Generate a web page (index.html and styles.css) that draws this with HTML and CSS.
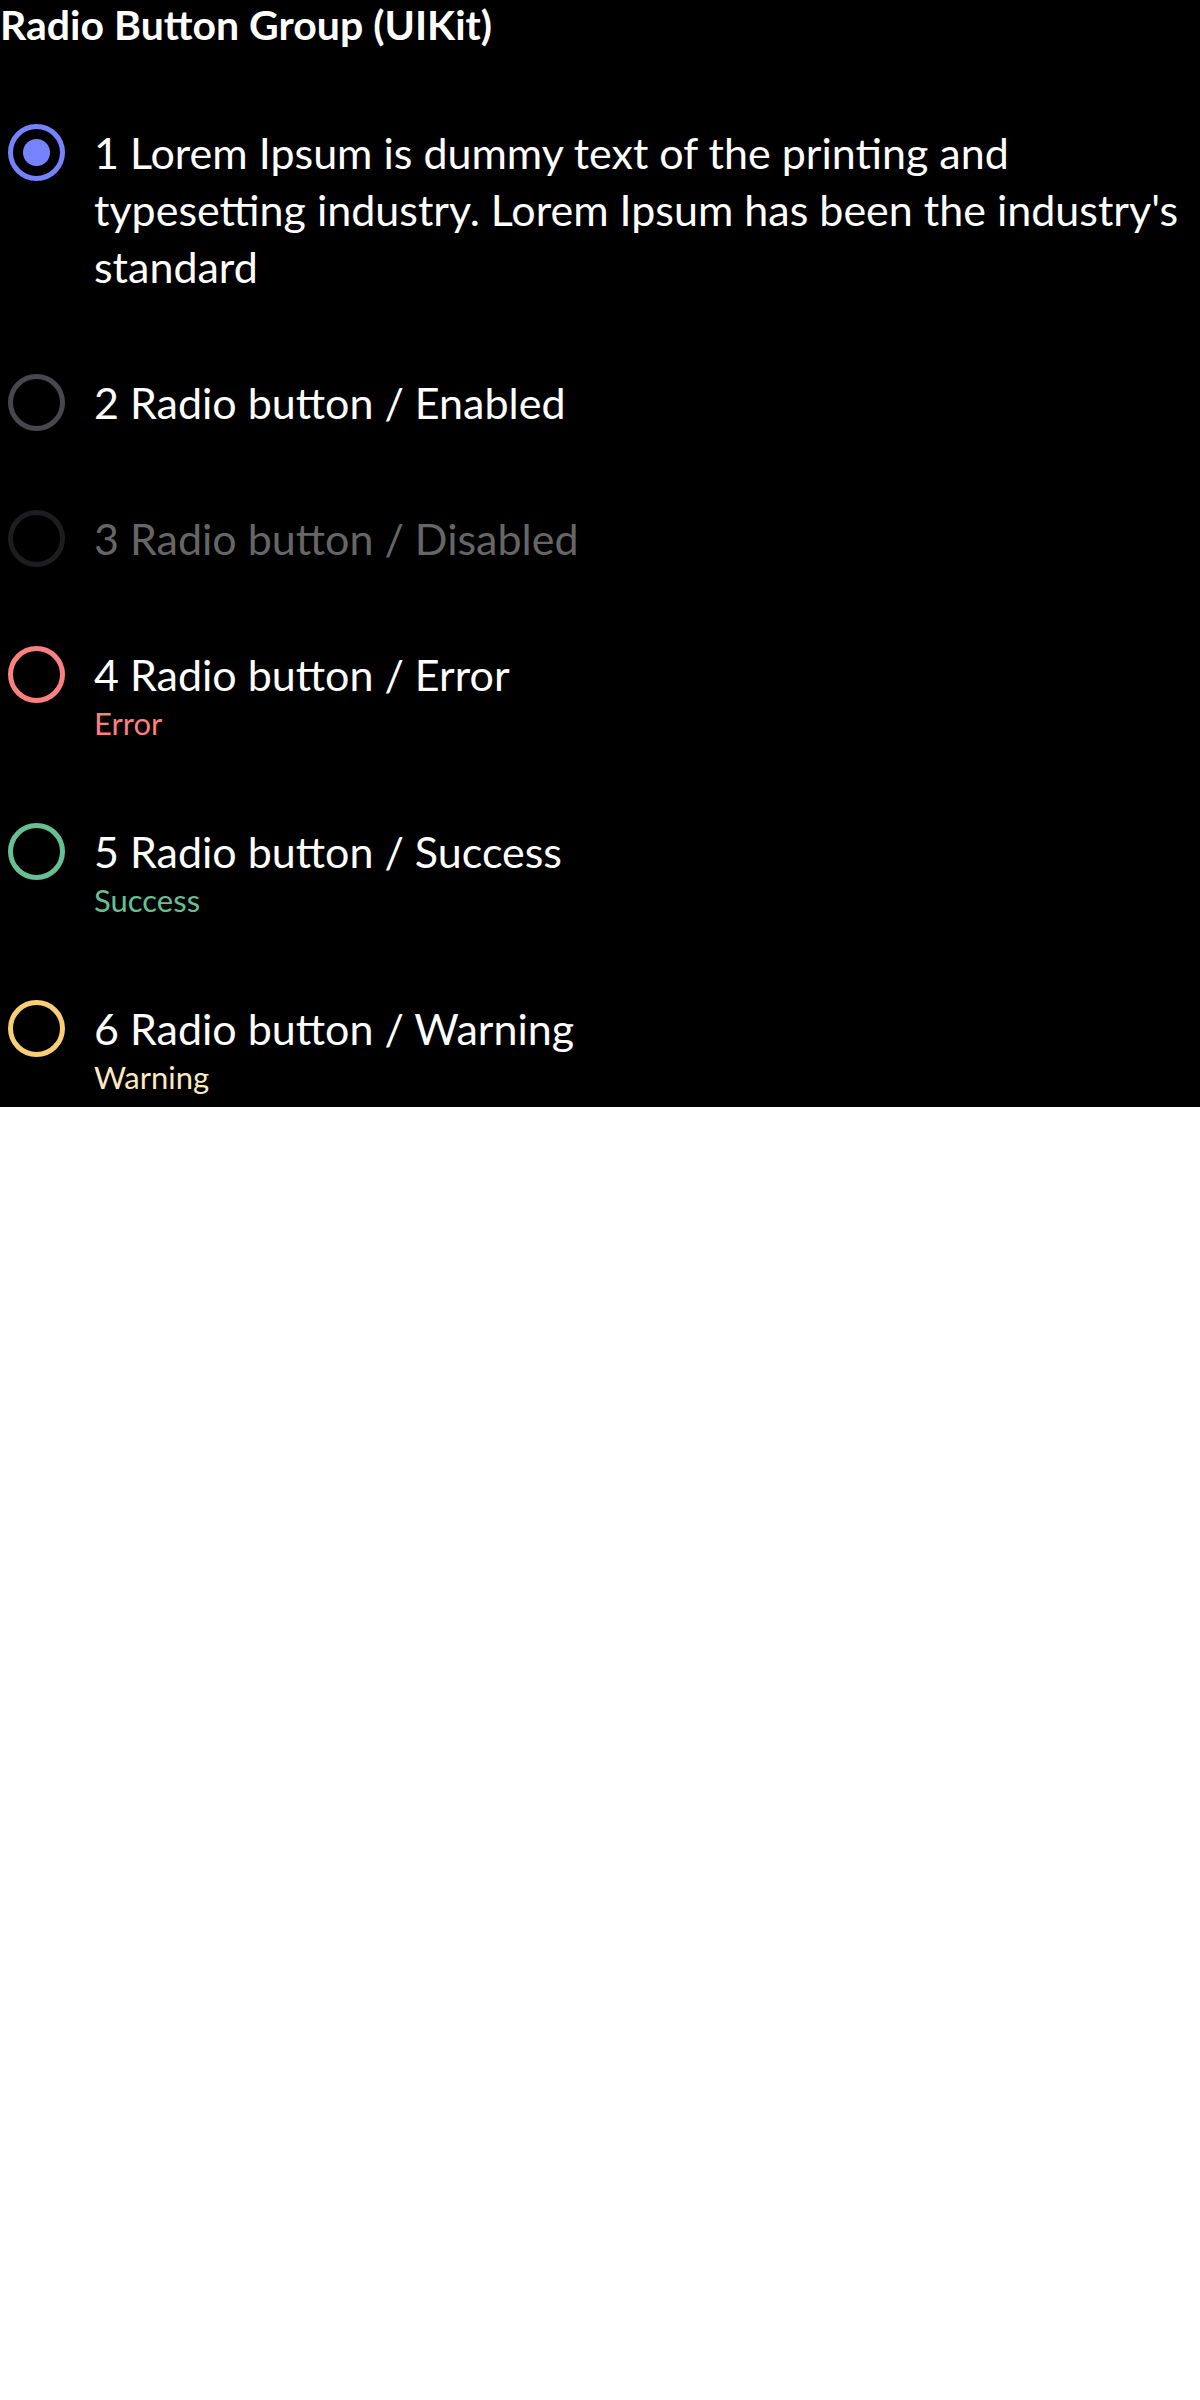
FILE: index.html
```
<!DOCTYPE html>
<html lang="en">
<head>
<meta charset="utf-8">
<meta name="viewport" content="width=device-width, initial-scale=1">
<title>Radio Button Group (UIKit)</title>
<link rel="stylesheet" href="styles.css">
</head>
<body>
<main class="screen">
  <fieldset class="group">
    <legend class="title">Radio Button Group (UIKit)</legend>
    <div class="option">
      <input class="radio" type="radio" name="demo" id="r1" checked>
      <label class="label" for="r1">1 Lorem Ipsum is dummy text of the printing and typesetting industry. Lorem Ipsum has been the industry's standard</label>
    </div>
    <div class="option">
      <input class="radio" type="radio" name="demo" id="r2">
      <label class="label" for="r2">2 Radio button / Enabled</label>
    </div>
    <div class="option disabled">
      <input class="radio" type="radio" name="demo" id="r3" disabled>
      <label class="label" for="r3">3 Radio button / Disabled</label>
    </div>
    <div class="option error">
      <input class="radio" type="radio" name="demo" id="r4" aria-describedby="h4">
      <label class="label" for="r4">4 Radio button / Error</label>
      <p class="helper" id="h4">Error</p>
    </div>
    <div class="option success">
      <input class="radio" type="radio" name="demo" id="r5" aria-describedby="h5">
      <label class="label" for="r5">5 Radio button / Success</label>
      <p class="helper" id="h5">Success</p>
    </div>
    <div class="option warning">
      <input class="radio" type="radio" name="demo" id="r6" aria-describedby="h6">
      <label class="label" for="r6">6 Radio button / Warning</label>
      <p class="helper" id="h6">Warning</p>
    </div>
  </fieldset>
</main>
</body>
</html>
```
FILE: styles.css
```
* {
  box-sizing: border-box;
}

body {
  margin: 0;
  background: #fff;
  font-family: Lato, "Open Sans", sans-serif;
}

.screen {
  background: #000;
  color: #fff;
}

.group {
  display: flex;
  flex-direction: column;
  gap: 79px;
  margin: 0;
  padding: 0 8px 9px;
  border: 0;
}

.title {
  margin: 0 -8px 74px;
  padding: 0;
  font-size: 41px;
  font-weight: 700;
  line-height: 50px;
}

.option {
  --ring: #48474e;
  --helper: #fff;
  display: grid;
  grid-template-columns: 57px minmax(0, 1fr);
  column-gap: 29px;
  align-items: start;
}

.radio {
  appearance: none;
  width: 57px;
  height: 57px;
  margin: 0;
  border: 5px solid var(--ring);
  border-radius: 50%;
}

.radio:checked {
  --ring: #7583ff;
  background: radial-gradient(circle, var(--ring) 13px, transparent 14px);
}

.label {
  font-size: 43px;
  line-height: 57px;
}

.helper {
  grid-column: 2;
  margin: 0;
  color: var(--helper);
  font-size: 31px;
  line-height: 41px;
}

.disabled {
  --ring: #1d1d1f;
  color: #666;
}

.error {
  --ring: #fb8080;
  --helper: #fb8080;
}

.success {
  --ring: #66bf95;
  --helper: #66bf95;
}

.warning {
  --ring: #f9cf76;
  --helper: #fde9c0;
}
```
